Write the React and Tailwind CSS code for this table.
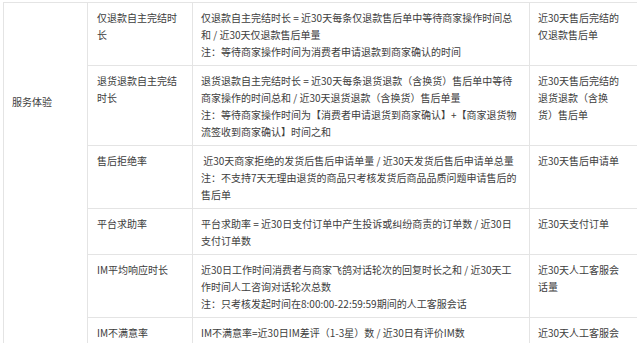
const rows = [
  {
    name: ["仅退款自主完结时", "长"],
    formula: [
      "仅退款自主完结时长 = 近30天每条仅退款售后单中等待商家操作时间总",
      "和 / 近30天仅退款售后单量",
      "注：等待商家操作时间为消费者申请退款到商家确认的时间",
    ],
    scope: ["近30天售后完结的", "仅退款售后单"],
  },
  {
    name: ["退货退款自主完结", "时长"],
    formula: [
      "退货退款自主完结时长 = 近30天每条退货退款（含换货）售后单中等待",
      "商家操作的时间总和 / 近30天退货退款（含换货）售后单量",
      "注：等待商家操作时间为【消费者申请退货到商家确认】+【商家退货物",
      "流签收到商家确认】时间之和",
    ],
    scope: ["近30天售后完结的", "退货退款（含换", "货）售后单"],
  },
  {
    name: ["售后拒绝率"],
    formula: [
      "\u00a0近30天商家拒绝的发货后售后申请单量 / 近30天发货后售后申请单总量",
      "注：不支持7天无理由退货的商品只考核发货后商品品质问题申请售后的",
      "售后单",
    ],
    scope: ["近30天售后申请单"],
  },
  {
    name: ["平台求助率"],
    formula: [
      "平台求助率 = 近30日支付订单中产生投诉或纠纷商责的订单数 / 近30日",
      "支付订单数",
    ],
    scope: ["近30天支付订单"],
  },
  {
    name: ["IM平均响应时长"],
    formula: [
      "近30日工作时间消费者与商家飞鸽对话轮次的回复时长之和 / 近30天工",
      "作时间人工咨询对话轮次总数",
      "注：只考核发起时间在8:00:00-22:59:59期间的人工客服会话",
    ],
    scope: ["近30天人工客服会", "话量"],
  },
  {
    name: ["IM不满意率"],
    formula: [
      "IM不满意率=近30日IM差评（1-3星）数 / 近30日有评价IM数",
      "注：只考核发起时间在8:00:00-22:59:59期间的人工客服会话",
    ],
    scope: ["近30天人工客服会", "话量"],
  },
];

function Lines({ items }) {
  return items.map((line, i) => (
    <div key={i} className="whitespace-nowrap">
      {line}
    </div>
  ));
}

export default function App() {
  return (
    <div
      className="w-[637px] h-[343px] overflow-hidden bg-white pt-[2px] pl-[3px] text-[10px] leading-[17px] text-[#3d3d3d]"
      style={{ fontFamily: '"Noto Sans CJK SC", "Noto Sans", sans-serif' }}
    >
      <div className="flex w-[700px] border-t border-[#e4e4e4]">
        <div className="w-[85px] shrink-0 border-x border-[#e4e4e4] px-[8px] pt-[90px]">
          服务体验
        </div>
        <div className="flex flex-col">
          {rows.map((row, i) => (
            <div key={i} className="grid grid-cols-[105px_337px_110px] border-b border-[#e4e4e4]">
              <div className="border-r border-[#e4e4e4] pl-[9px] pr-[4px] pt-[6px] pb-[5px]">
                <Lines items={row.name} />
              </div>
              <div className="border-r border-[#e4e4e4] px-[8px] pt-[6px] pb-[5px]">
                <Lines items={row.formula} />
              </div>
              <div className="px-[8px] pt-[6px] pb-[5px]">
                <Lines items={row.scope} />
              </div>
            </div>
          ))}
        </div>
      </div>
    </div>
  );
}
